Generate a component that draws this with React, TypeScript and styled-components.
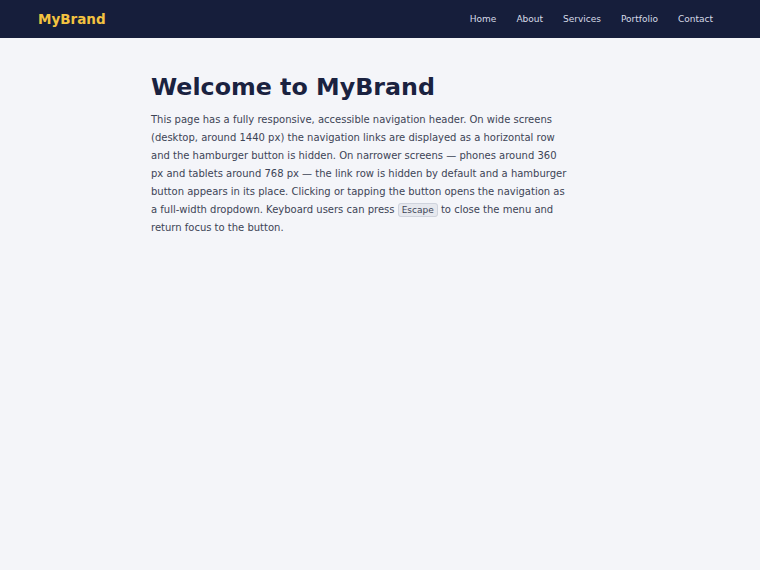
import React from 'react';
import styled, { createGlobalStyle } from 'styled-components';

const NAV_LINKS = ['Home', 'About', 'Services', 'Portfolio', 'Contact'];

const GlobalStyle = createGlobalStyle`
  html,
  body {
    margin: 0;
    padding: 0;
    background: #f4f5f9;
    font-family: 'DejaVu Sans', Verdana, sans-serif;
  }
`;

const App: React.FC = () => {
  return (
    <SPage>
      <GlobalStyle />
      <SHeader>
        <SBrand href="#">MyBrand</SBrand>
        <SNav aria-label="Main navigation">
          <SNavList>
            {NAV_LINKS.map((link) => (
              <li key={link}>
                <SNavLink href="#">{link}</SNavLink>
              </li>
            ))}
          </SNavList>
        </SNav>
      </SHeader>

      <SMain>
        <STitle>Welcome to MyBrand</STitle>
        <SText>
          This page has a fully responsive, accessible navigation header. On wide screens
          (desktop, around 1440 px) the navigation links are displayed as a horizontal row
          and the hamburger button is hidden. On narrower screens — phones around 360 px and
          tablets around 768 px — the link row is hidden by default and a hamburger button
          appears in its place. Clicking or tapping the button opens the navigation as a
          full-width dropdown. Keyboard users can press <SKey>Escape</SKey> to close the menu
          and return focus to the button.
        </SText>
      </SMain>
    </SPage>
  );
};

const SPage = styled.div`
  min-height: 570px;
  background: #f4f5f9;
`;

const SHeader = styled.header`
  display: flex;
  align-items: center;
  justify-content: space-between;

  height: 38px;
  padding: 0 37px 0 38px;
  box-sizing: border-box;
  background: #161e3b;
`;

const SBrand = styled.a`
  color: #f3c340;
  font-size: 13.5px;
  font-weight: 700;
  text-decoration: none;
`;

const SNav = styled.nav`
  display: flex;
`;

const SNavList = styled.ul`
  display: flex;
  margin: 0;
  padding: 0;
  list-style: none;
`;

const SNavLink = styled.a`
  display: block;
  padding: 6px 10px;
  color: #d6dbe8;
  font-size: 9px;
  text-decoration: none;
`;

const SMain = styled.main`
  max-width: 458px;
  margin: 0 auto;
  padding-top: 35px;
`;

const STitle = styled.h1`
  margin: 0 0 9px;
  color: #1a2240;
  font-size: 23.75px;
  font-weight: 700;
  line-height: 1.2;
`;

const SText = styled.p`
  max-width: 420px;
  margin: 0;
  color: #3d4456;
  font-size: 10px;
  line-height: 18px;
`;

const SKey = styled.kbd`
  padding: 1px 3px;
  border: 1px solid #cfd3dd;
  border-radius: 3px;
  background: #e6e8ee;
  color: #3d4456;
  font-family: 'DejaVu Sans', Verdana, sans-serif;
  font-size: 9px;
`;

export default App;
